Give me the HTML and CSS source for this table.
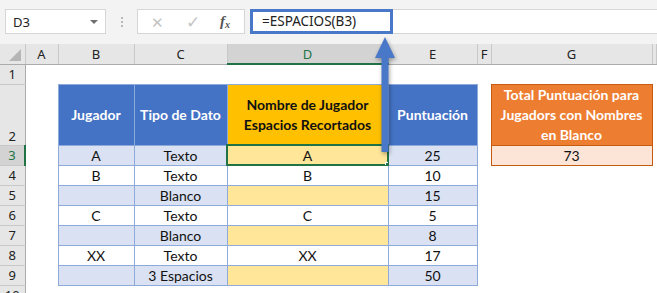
FILE: index.html
```html
<!DOCTYPE html>
<html lang="es">

<head>
    <meta charset="UTF-8">
    <meta name="viewport" content="width=device-width, initial-scale=1.0">
    <title>ESPACIOS - Hoja de cálculo</title>
    <link rel="stylesheet" href="styles.css">
</head>

<body>

    <div class="formula_row">
        <div class="name_box">
            <span>D3</span>
            <span class="drop"></span>
        </div>
        <div class="grip"><i></i><i></i><i></i></div>
        <div class="fx_buttons">
            <span class="btn cancel">&#x2715;</span>
            <span class="btn enter">&#x2713;</span>
            <span class="btn fx">f<sub>x</sub></span>
        </div>
        <div class="formula_input">
            <span class="formula_text">=ESPACIOS(B3)</span>
        </div>
    </div>

    <table class="sheet">
        <colgroup>
            <col class="w_rh">
            <col class="w_a">
            <col class="w_b">
            <col class="w_c">
            <col class="w_d">
            <col class="w_e">
            <col class="w_f">
            <col class="w_g">
            <col>
        </colgroup>
        <tr class="col_heads">
            <th class="corner"><span class="tri"></span></th>
            <th>A</th>
            <th>B</th>
            <th>C</th>
            <th class="active">D</th>
            <th>E</th>
            <th>F</th>
            <th>G</th>
            <th></th>
        </tr>
        <tr>
            <th class="rh">1</th>
            <td></td><td></td><td></td><td></td><td></td><td></td><td></td><td></td>
        </tr>
        <tr class="tall">
            <th class="rh bottom">2</th>
            <td></td>
            <td class="hd blue">Jugador</td>
            <td class="hd blue">Tipo de Dato</td>
            <td class="hd gold">Nombre de Jugador<br>Espacios Recortados</td>
            <td class="hd blue">Puntuación</td>
            <td></td>
            <td class="hd orange">Total Puntuación para<br>Jugadors con Nombres<br>en Blanco</td>
            <td></td>
        </tr>
        <tr>
            <th class="rh active">3</th>
            <td></td>
            <td class="c band">A</td>
            <td class="c band">Texto</td>
            <td class="c pale selected">A<span class="handle"></span></td>
            <td class="c band">25</td>
            <td></td>
            <td class="c peach">73</td>
            <td></td>
        </tr>
        <tr>
            <th class="rh">4</th>
            <td></td>
            <td class="c">B</td>
            <td class="c">Texto</td>
            <td class="c">B</td>
            <td class="c">10</td>
            <td></td><td></td><td></td>
        </tr>
        <tr>
            <th class="rh">5</th>
            <td></td>
            <td class="c band"></td>
            <td class="c band">Blanco</td>
            <td class="c pale"></td>
            <td class="c band">15</td>
            <td></td><td></td><td></td>
        </tr>
        <tr>
            <th class="rh">6</th>
            <td></td>
            <td class="c">C</td>
            <td class="c">Texto</td>
            <td class="c">C</td>
            <td class="c">5</td>
            <td></td><td></td><td></td>
        </tr>
        <tr>
            <th class="rh">7</th>
            <td></td>
            <td class="c band"></td>
            <td class="c band">Blanco</td>
            <td class="c pale"></td>
            <td class="c band">8</td>
            <td></td><td></td><td></td>
        </tr>
        <tr>
            <th class="rh">8</th>
            <td></td>
            <td class="c">XX</td>
            <td class="c">Texto</td>
            <td class="c">XX</td>
            <td class="c">17</td>
            <td></td><td></td><td></td>
        </tr>
        <tr>
            <th class="rh">9</th>
            <td></td>
            <td class="c band"></td>
            <td class="c band">3 Espacios</td>
            <td class="c pale"></td>
            <td class="c band">50</td>
            <td></td><td></td><td></td>
        </tr>
        <tr>
            <th class="rh">10</th>
            <td></td><td></td><td></td><td></td><td></td><td></td><td></td><td></td>
        </tr>
    </table>

    <!-- pointer from the selected cell up to the formula -->
    <svg class="pointer" width="30" height="124" viewBox="0 0 30 124">
        <path d="M15 1 L25 22 L18.5 22 L18.5 116 L11.5 116 L11.5 22 L5 22 Z" fill="#4a78c8"/>
    </svg>

</body>

</html>
```

FILE: styles.css
```css
body {
    margin: 0;
    background: #fff;
    overflow: hidden;
    position: relative;
    font-family: "Lato", "Liberation Sans", sans-serif;
}

.formula_row {
    display: flex;
    align-items: flex-start;
    height: 44px;
    padding-top: 9px;
    box-sizing: border-box;
    background: #f3f3f3;
    font-family: "Noto Sans", "Liberation Sans", sans-serif;
    font-size: 13px;
    color: #222;
}

.name_box {
    margin-left: 5px;
    width: 101px;
    height: 25px;
    box-sizing: border-box;
    border: 1px solid #d6d6d6;
    background: #fff;
    display: flex;
    align-items: center;
    justify-content: space-between;
    padding: 0 7px 0 7px;
}

.drop {
    width: 0;
    height: 0;
    border-left: 4px solid transparent;
    border-right: 4px solid transparent;
    border-top: 4px solid #6f6f6f;
}

.grip {
    width: 31px;
    height: 25px;
    display: flex;
    flex-direction: column;
    align-items: center;
    justify-content: center;
    gap: 2px;
}

.grip i {
    width: 2px;
    height: 2px;
    background: #b9b9b9;
}

.fx_buttons {
    width: 108px;
    height: 25px;
    box-sizing: border-box;
    border: 1px solid #d6d6d6;
    background: #fff;
    display: flex;
    align-items: center;
    padding-left: 13px;
}

.btn {
    color: #c4c4c4;
    font-size: 15px;
}

.cancel {
    width: 35px;
}

.enter {
    width: 34px;
    font-size: 17px;
}

.fx {
    color: #555;
    font-family: "Liberation Serif", serif;
    font-style: italic;
    font-weight: bold;
    font-size: 15px;
}

.fx sub {
    font-size: 10px;
    vertical-align: -2px;
}

.formula_input {
    flex: 1;
    margin-left: 5px;
    height: 25px;
    box-sizing: border-box;
    border-top: 1px solid #d6d6d6;
    border-bottom: 1px solid #d6d6d6;
    background: #fff;
    position: relative;
}

.formula_text {
    position: absolute;
    top: -1px;
    left: 0;
    width: 143px;
    height: 25px;
    box-sizing: border-box;
    border: 3px solid #4a78c8;
    padding-left: 9px;
    line-height: 19px;
    font-size: 13.5px;
}

.sheet {
    border-collapse: collapse;
    table-layout: fixed;
    width: 657px;
    font-size: 14px;
    color: #111;
}

.w_rh { width: 25px; }
.w_a { width: 33px; }
.w_b { width: 76px; }
.w_c { width: 93px; }
.w_d { width: 161px; }
.w_e { width: 89px; }
.w_f { width: 14px; }
.w_g { width: 161px; }

.sheet tr {
    height: 20px;
}

.sheet tr.tall {
    height: 60px;
}

.sheet td,
.sheet th {
    padding: 0;
    overflow: hidden;
    white-space: nowrap;
}

.col_heads th {
    background: #e6e6e6;
    border-right: 1px solid #c8c8c8;
    border-bottom: 1px solid #ababab;
    font-family: "Noto Sans", "Liberation Sans", sans-serif;
    font-weight: normal;
    font-size: 13px;
    color: #222;
    height: 20px;
    box-sizing: border-box;
}

.col_heads th.active {
    background: #d3d3d3;
    color: #217346;
    border-bottom: 2px solid #217346;
}

.corner {
    position: relative;
}

.tri {
    position: absolute;
    right: 4px;
    bottom: 3px;
    width: 0;
    height: 0;
    border-left: 12px solid transparent;
    border-bottom: 12px solid #b5b5b5;
}

.rh {
    background: #e6e6e6;
    border-right: 1px solid #ababab;
    border-bottom: 1px solid #c8c8c8;
    font-family: "Noto Sans", "Liberation Sans", sans-serif;
    font-weight: normal;
    font-size: 13px;
    color: #222;
}

.rh.bottom {
    vertical-align: bottom;
}

.rh.active {
    background: #d3d3d3;
    color: #217346;
    border-right: 2px solid #217346;
}

.c {
    text-align: center;
    border: 1px solid #8eaadb;
}

.band {
    background: #d9e1f2;
}

.pale {
    background: #ffe699;
}

.hd {
    text-align: center;
    font-weight: bold;
    line-height: 20px;
    border: 1px solid #8eaadb;
}

.blue {
    background: #4472c4;
    color: #fff;
}

.gold {
    background: #ffc000;
    color: #111;
}

.orange {
    background: #ed7d31;
    color: #fff;
    border: 1px solid #c55a11;
}

.peach {
    background: #fce4d6;
    border: 1px solid #c55a11;
}

.selected {
    position: relative;
    outline: 2px solid #217346;
    outline-offset: -1px;
    overflow: visible;
}

.handle {
    position: absolute;
    right: -4px;
    bottom: -4px;
    width: 5px;
    height: 5px;
    background: #217346;
    border: 1px solid #fff;
}

.pointer {
    position: absolute;
    left: 370px;
    top: 36px;
    filter: drop-shadow(1px 2px 2px rgba(0, 0, 0, 0.35));
}
```
